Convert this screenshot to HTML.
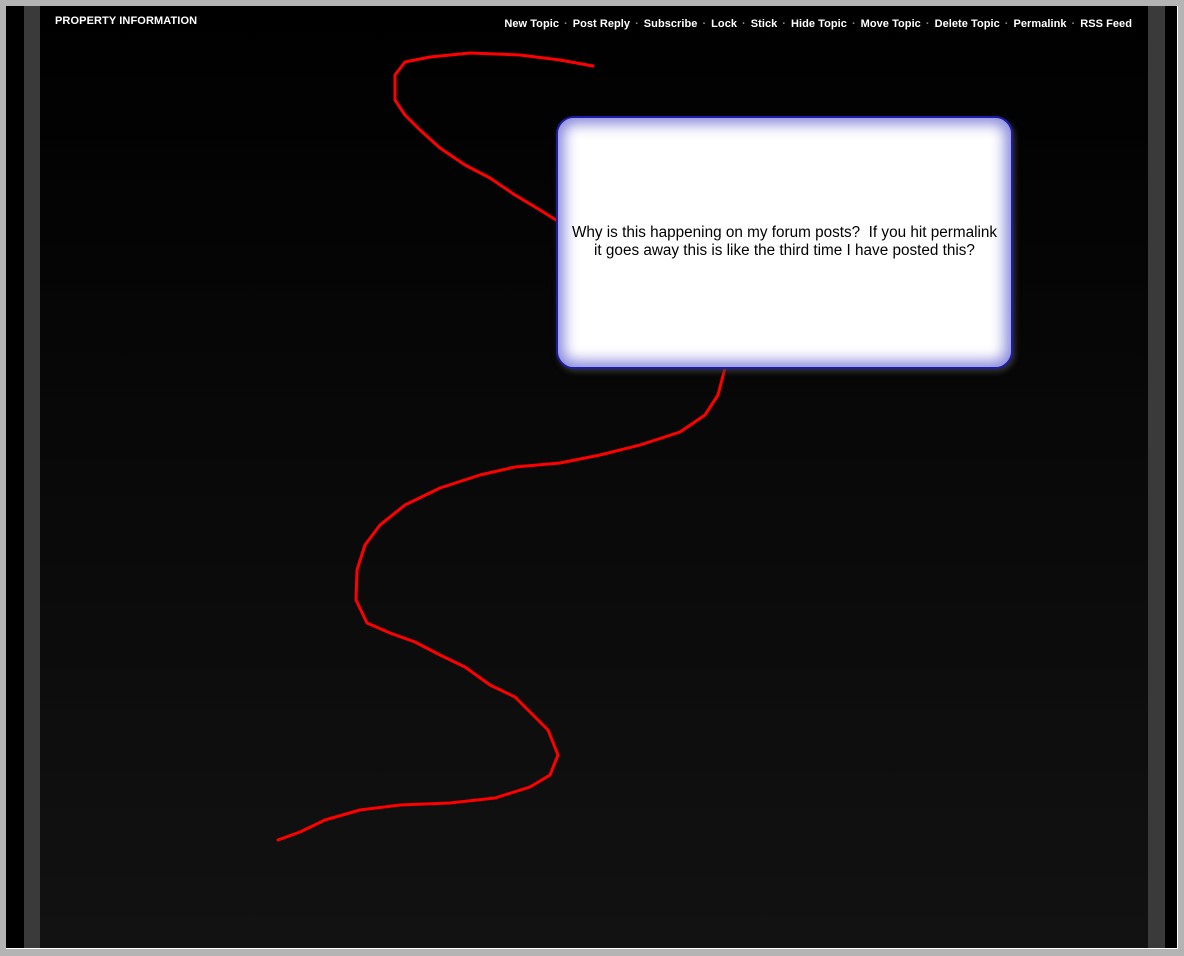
<!DOCTYPE html>
<html><head><meta charset="utf-8"><style>
html,body{margin:0;padding:0;width:1184px;height:956px;overflow:hidden;background:#b4b4b4;font-family:"Liberation Sans",Arial,sans-serif}
#frame{position:absolute;left:6px;top:6px;width:1171px;height:942px;background:#000;border-right:1px solid #fff;border-bottom:1px solid #fff}
#lbar{position:absolute;left:24px;top:6px;width:16px;height:942px;background:#3a3a3a}
#rbar{position:absolute;left:1148px;top:6px;width:17px;height:942px;background:#3a3a3a}
#content{position:absolute;left:40px;top:6px;width:1108px;height:942px;background:linear-gradient(#000,#121212)}
#title{position:absolute;left:55px;top:15px;color:#fff;font-weight:bold;font-size:11px;letter-spacing:0.1px}
#links{position:absolute;right:52px;top:18px;color:#fff;font-weight:bold;font-size:11px;letter-spacing:0.05px}
#links span{color:#888;margin:0 5px}
#box{position:absolute;left:556px;top:116px;width:453px;height:249px;border:2px solid #1c1ca8;border-radius:18px;background:#fff;box-shadow:inset 0 0 14px 6px #8888dd,2px 3px 6px rgba(60,60,60,.8);}
#box p{position:absolute;left:-6px;right:-6px;top:106px;margin:0;text-align:center;font-size:15.3px;line-height:18px;color:#000}
svg{position:absolute;left:0;top:0}
</style></head><body>
<div id="frame"></div><div id="lbar"></div><div id="rbar"></div><div id="content"></div>
<div id="title">PROPERTY INFORMATION</div>
<div id="links">New Topic<span>·</span>Post Reply<span>·</span>Subscribe<span>·</span>Lock<span>·</span>Stick<span>·</span>Hide Topic<span>·</span>Move Topic<span>·</span>Delete Topic<span>·</span>Permalink<span>·</span>RSS Feed</div>
<svg width="1184" height="956"><g fill="none" stroke="#f00" stroke-width="3" stroke-linejoin="round" stroke-linecap="round">
<polyline points="593,66 560,60 520,55 470,53 430,57 405,62 395,75 395,100 405,115 420,130 440,148 465,165 490,178 515,195 540,210 556,220"/>
<polyline points="725,368 718,395 705,415 680,432 640,445 600,455 560,463 515,467 480,475 440,488 405,505 380,525 365,545 357,570 356,600 367,623 390,633 415,642 440,655 465,667 490,685 515,697 530,712 548,730 558,755 550,775 530,787 495,798 450,803 400,805 360,810 325,820 300,832 278,840"/>
</g></svg>
<div id="box"><p>Why is this happening on my forum posts?&nbsp; If you hit permalink<br>it goes away this is like the third time I have posted this?</p></div>
</body></html>
